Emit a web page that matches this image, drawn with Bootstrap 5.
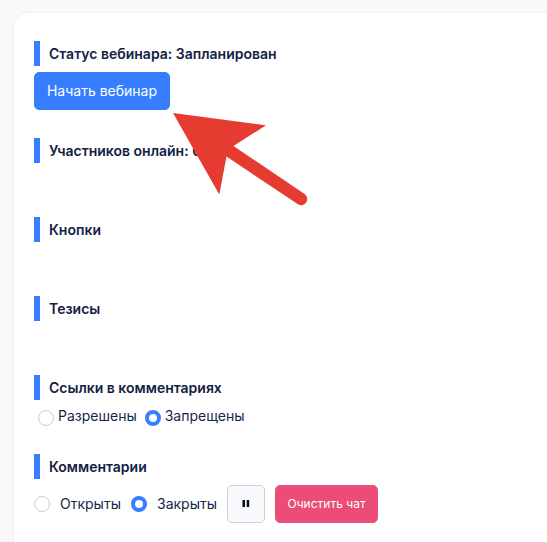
<!DOCTYPE html>
<html lang="ru">
<head>
<meta charset="utf-8">
<meta name="viewport" content="width=device-width, initial-scale=1">
<title>Вебинар</title>
<link href="https://cdn.jsdelivr.net/npm/bootstrap@5.3.0/dist/css/bootstrap.min.css" rel="stylesheet">
<style>
body { background: #f9f9f9; color: #15284b; font-family: Inter, "Liberation Sans", sans-serif; font-size: 14px; line-height: 21px; }
.page { height: 542px; padding: 13px 0 0 14px; }
.panel { width: 640px; height: 640px; padding: 28px 20px 0; border: 1px solid #f1f1f4; border-radius: 14px; margin: -1px 0 0 -1px; box-shadow: 0 3px 6px rgba(0,0,0,.03); }
.section-title { height: 25px; padding-left: 9px; border-left: 6px solid #377dff; font-size: 14px; font-weight: 600; line-height: 26px; color: #132144; margin: 0; white-space: nowrap; }
.block { height: 79px; }
.block-status { height: 97px; }
.btn-start { --bs-btn-bg: #377dff; --bs-btn-border-color: #377dff; width: 136px; height: 38px; padding: 0; margin-top: 6px; font-size: 14px; font-weight: 400; border-radius: 5px; line-height: 36px; }
.form-check-input.dot { width: 16px; height: 16px; margin: 0; float: none; border: 1px solid #ccc; flex: none; }
.form-check-input.dot:checked { border: 4px solid #377dff; background: #fff none; }
.links-row { margin: 5px 0 0 4px; }
.links-row .dot { margin-top: 5px; }
.chat-row { margin-top: 6px; height: 38px; }
.first-option { width: 97px; }
.second-option { width: 96px; }
.option-text { margin: -1px 0 1px 10px; }
.btn-pause { width: 38px; height: 38px; padding: 0; border: 1px solid #ced1d5; border-radius: 5px; background: #f8fafd; }
.btn-clear { --bs-btn-bg: #ed4c78; --bs-btn-border-color: #ed4c78; width: 103px; height: 38px; padding: 0; margin-left: 10px; border-radius: 5px; font-size: 12px; font-weight: 400; }
.pointer-arrow { left: 170px; top: 110px; pointer-events: none; }
</style>
</head>
<body>
<main class="page position-relative overflow-hidden">
  <div class="panel bg-white">
    <section class="block-status">
      <h2 class="section-title">Статус вебинара: Запланирован</h2>
      <button class="btn btn-primary btn-start d-block" type="button">Начать вебинар</button>
    </section>
    <section class="block"><h2 class="section-title">Участников онлайн: 0</h2></section>
    <section class="block"><h2 class="section-title">Кнопки</h2></section>
    <section class="block"><h2 class="section-title">Тезисы</h2></section>
    <section class="block">
      <h2 class="section-title">Ссылки в комментариях</h2>
      <div class="links-row d-flex">
        <label class="d-flex gap-1 me-2"><input class="form-check-input dot" type="radio" name="links"><span>Разрешены</span></label>
        <label class="d-flex gap-1"><input class="form-check-input dot" type="radio" name="links" checked><span>Запрещены</span></label>
      </div>
    </section>
    <section>
      <h2 class="section-title">Комментарии</h2>
      <div class="chat-row d-flex align-items-center">
        <label class="first-option d-flex align-items-center"><input class="form-check-input dot" type="radio" name="comments"><span class="option-text">Открыты</span></label>
        <label class="second-option d-flex align-items-center"><input class="form-check-input dot" type="radio" name="comments" checked><span class="option-text">Закрыты</span></label>
        <button class="btn btn-pause d-flex align-items-center justify-content-center" type="button" aria-label="Пауза">
          <svg width="8" height="8" viewBox="0 0 8 8"><path d="M.5 0H3v7H.5zM4.7 0h2.5v7H4.7z" fill="#000b24"/></svg>
        </button>
        <button class="btn btn-danger btn-clear" type="button">Очистить чат</button>
      </div>
    </section>
  </div>
  <svg class="pointer-arrow position-absolute" width="140" height="100" viewBox="170 110 140 100" aria-hidden="true">
    <path d="M173 113L266 125.2L233.5 146L304.2 193.8A6 6 0 0 1 298 204.3L226.5 156.5L219.3 194.5Z" fill="#e53b30"/>
  </svg>
</main>
<script src="https://cdn.jsdelivr.net/npm/bootstrap@5.3.0/dist/js/bootstrap.bundle.min.js"></script>
</body>
</html>
